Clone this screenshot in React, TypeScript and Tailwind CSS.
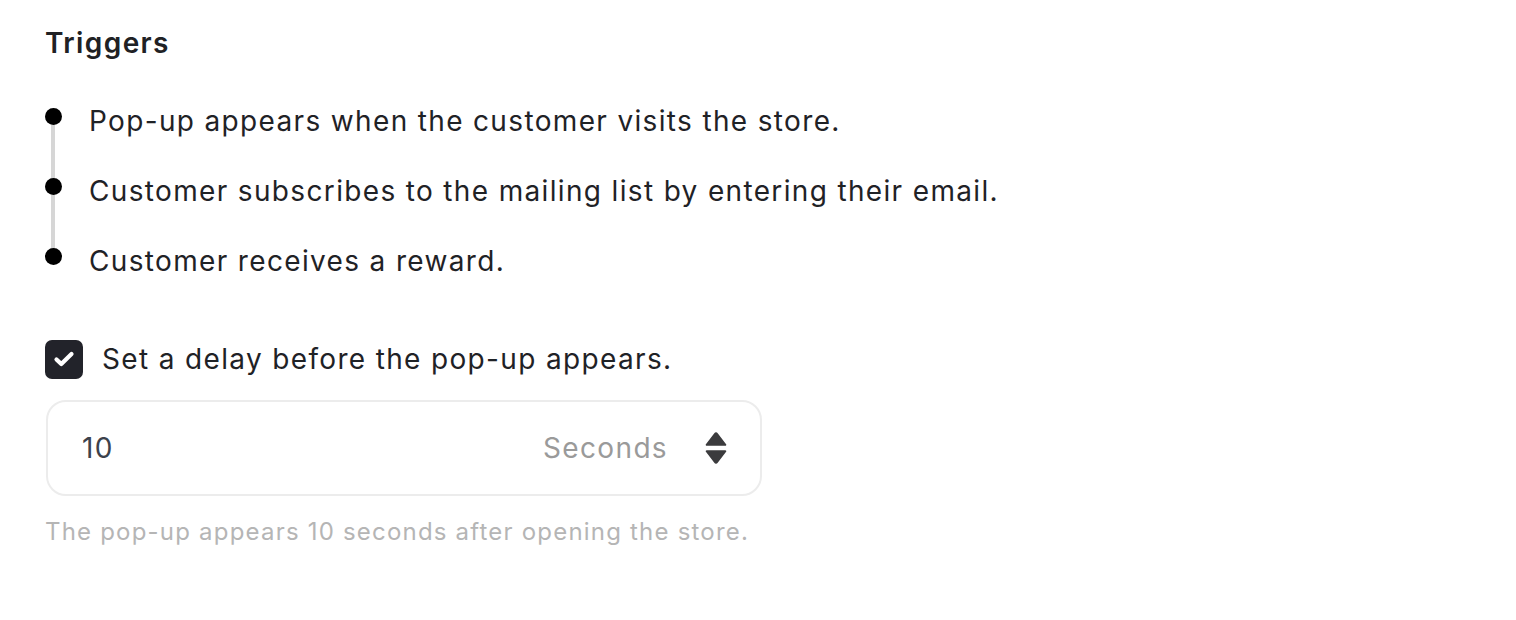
import React from "react";

const steps = [
  "Pop-up appears when the customer visits the store.",
  "Customer subscribes to the mailing list by entering their email.",
  "Customer receives a reward.",
];

const StepperIcon = () => (
  <svg width="24" height="34" viewBox="0 0 24 34" className="shrink-0">
    <path d="M10.3 2.2a2 2 0 0 1 3.4 0l8.4 11a1 1 0 0 1-0.8 1.6H2.7a1 1 0 0 1-0.8-1.6z" fill="#3b3b3d" />
    <path d="M10.3 31.8a2 2 0 0 0 3.4 0l8.4-11a1 1 0 0 0-0.8-1.6H2.7a1 1 0 0 0-0.8 1.6z" fill="#3b3b3d" />
  </svg>
);

export default function App() {
  return (
    <div
      className="min-h-[620px] w-full bg-white pl-[45px] pt-[25px] text-[#1f2226]"
      style={{ fontFamily: "Inter, 'Noto Sans', sans-serif" }}
    >
      <h2 className="text-[28px] font-semibold leading-[36px] tracking-[0.05em] text-[#202124]">Triggers</h2>

      {/* Steps */}
      <div className="relative mt-[40px] flex flex-col gap-[30px]">
        <div className="absolute left-[6px] top-[15px] bottom-[24px] w-[4px] bg-[#d6d6d6]" />
        {steps.map((step) => (
          <div key={step} className="relative flex items-start">
            <div className="mt-[7px] h-[17px] w-[17px] shrink-0 rounded-full bg-black" />
            <p className="ml-[27px] text-[28px] leading-[40px] tracking-[0.048em] text-[#1f2226]">{step}</p>
          </div>
        ))}
      </div>

      {/* Delay */}
      <label className="mt-[58px] flex items-center gap-[19px]">
        <span className="flex h-[39px] w-[38px] items-center justify-center rounded-[7px] bg-[#22232a]">
          <svg width="22" height="18" viewBox="0 0 22 18">
            <path d="M3.5 9.5l4.8 4.6L18.5 4" fill="none" stroke="white" strokeWidth="4.2" strokeLinecap="round" strokeLinejoin="round" />
          </svg>
        </span>
        <span className="text-[28px] leading-[40px] tracking-[0.048em] text-[#1f2226]">
          Set a delay before the pop-up appears.
        </span>
      </label>

      <div className="mt-[21px] ml-[1px] flex h-[96px] w-[716px] items-center rounded-[20px] border-2 border-[#ececec] pl-[34px] pr-[32px]">
        <span className="flex-1 text-[28px] tracking-[0.048em] text-[#3c424c]">10</span>
        <span className="mr-[36px] text-[28px] tracking-[0.048em] text-[#9a9a9a]">Seconds</span>
        <StepperIcon />
      </div>

      <p className="mt-[20px] text-[24px] leading-[32px] tracking-[0.05em] text-[#b5b5b5]">
        The pop-up appears 10 seconds after opening the store.
      </p>
    </div>
  );
}
